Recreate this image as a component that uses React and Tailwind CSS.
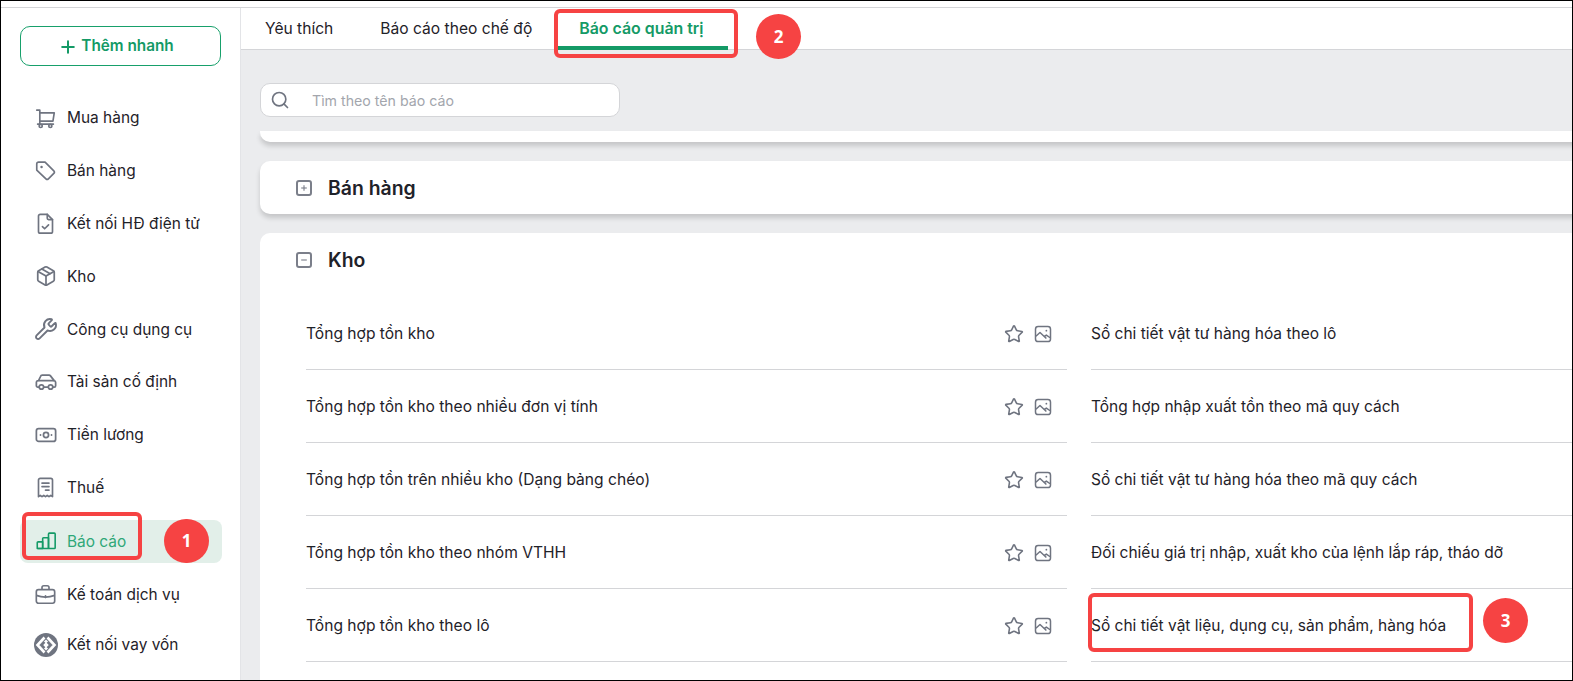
import { Plus, Package, Wrench, Star, Search } from "lucide-react";

const Cart = (props) => (
  <svg viewBox="0 0 24 24" fill="none" stroke="currentColor" strokeWidth="1.9" strokeLinejoin="round" strokeLinecap="round" {...props}>
    <path d="M2 2.5h3.5v15.5" />
    <path d="M5.5 5.5H22l-1.5 9.5h-15" />
    <path d="M3 18.5h18" />
    <circle cx="6.5" cy="20.5" r="1.8" />
    <circle cx="17.5" cy="20.5" r="1.8" />
  </svg>
);

const TagIcon = (props) => (
  <svg viewBox="0 0 24 24" fill="none" stroke="currentColor" strokeWidth="1.9" strokeLinejoin="round" {...props}>
    <path d="M2 4.5a2 2 0 0 1 2-2h7.5l10 10a2 2 0 0 1 0 2.8l-6.2 6.2a2 2 0 0 1-2.8 0L2 11.5z" />
    <circle cx="7.5" cy="8" r="1.4" fill="currentColor" stroke="none" />
  </svg>
);

const FileIcon = (props) => (
  <svg viewBox="0 0 24 24" fill="none" stroke="currentColor" strokeWidth="1.9" strokeLinejoin="round" strokeLinecap="round" {...props}>
    <path d="M6 1.5h8l6 6V21a2 2 0 0 1-2 2H6a2 2 0 0 1-2-2V3.5a2 2 0 0 1 2-2z" />
    <path d="M14 1.5V6a1.5 1.5 0 0 0 1.5 1.5H20" />
    <path d="M8.5 15.5l2.5 2.5 4.5-4.5" />
  </svg>
);

const CarIcon = (props) => (
  <svg viewBox="0 0 24 24" fill="none" stroke="currentColor" strokeWidth="1.9" strokeLinejoin="round" {...props}>
    <path d="M4.5 17.5H3a1.5 1.5 0 0 1-1.5-1.5v-3.5a2 2 0 0 1 2-2h.4L6 6a2 2 0 0 1 1.9-1.4h7.5a2 2 0 0 1 1.5.7l4 5.2a2 2 0 0 1 1.6 2V16a1.5 1.5 0 0 1-1.5 1.5h-1.5" />
    <path d="M9.5 17.5h5M4 10.5h17" />
    <circle cx="7" cy="17.5" r="2.4" />
    <circle cx="17" cy="17.5" r="2.4" />
  </svg>
);

const Money = (props) => (
  <svg viewBox="0 0 24 24" fill="none" stroke="currentColor" strokeWidth="1.8" {...props}>
    <rect x="1.5" y="5" width="21" height="14" rx="2.5" />
    <circle cx="12" cy="12" r="2.8" />
    <path d="M6 12h.01M18 12h.01" strokeWidth="2" strokeLinecap="round" />
  </svg>
);

const Receipt = (props) => (
  <svg viewBox="0 0 24 24" fill="none" stroke="currentColor" strokeWidth="1.9" strokeLinejoin="round" {...props}>
    <path d="M4 22.5V3.5a2 2 0 0 1 2-2h12a2 2 0 0 1 2 2v19l-2-1.5-2 1.5-2-1.5-2 1.5-2-1.5-2 1.5-2-1.5z" />
    <path d="M8 7h8M8 11h8M12 15h4" strokeLinecap="round" />
  </svg>
);

const Bars = (props) => (
  <svg viewBox="0 0 24 24" fill="none" stroke="currentColor" strokeWidth="2.1" strokeLinejoin="round" {...props}>
    <path d="M1.5 21v-7a1 1 0 0 1 1-1H8v8z" />
    <path d="M8 21V9a1 1 0 0 1 1-1h5.5a.5.5 0 0 1 .5.5V21" />
    <path d="M15 21V3.5a1 1 0 0 1 1-1h6a1 1 0 0 1 1 1V20a1 1 0 0 1-1 1H2" />
  </svg>
);

const Briefcase = (props) => (
  <svg viewBox="0 0 24 24" fill="none" stroke="currentColor" strokeWidth="1.9" strokeLinejoin="round" {...props}>
    <rect x="1.5" y="6.5" width="21" height="15.5" rx="2.5" />
    <path d="M8 6.5V4a2 2 0 0 1 2-2h4a2 2 0 0 1 2 2v2.5" />
    <path d="M1.5 13c6.5 2.5 14.5 2.5 21 0" />
    <path d="M12 13.5v2" strokeLinecap="round" />
  </svg>
);

const Loan = (props) => (
  <svg viewBox="0 0 24 24" {...props}>
    <circle cx="12" cy="12" r="12" fill="currentColor" />
    <path d="M10.5 4.5 3.5 12l7 7.5M13.5 4.5l7 7.5-7 7.5" fill="none" stroke="#fff" strokeWidth="2.6" />
    <path d="M12 6.5 17.5 12 12 17.5 6.5 12z" fill="#fff" />
    <path d="M10.5 9 7.8 12l2.7 3M13.5 9l2.7 3-2.7 3" fill="none" stroke="currentColor" strokeWidth="2.2" />
  </svg>
);

const PhotoIcon = (props) => (
  <svg viewBox="0 0 24 24" fill="none" stroke="currentColor" strokeWidth="2" strokeLinejoin="round" {...props}>
    <rect x="2" y="2" width="20" height="20" rx="3.5" />
    <path d="M2.5 15l5.5-5 8.5 8M14 15l2.5-1.5L21.5 17" />
    <circle cx="16.5" cy="7.5" r="1.2" fill="currentColor" stroke="none" />
  </svg>
);

const SquareSign = ({ minus }) => (
  <span className="flex h-[16px] w-[16px] items-center justify-center rounded-[3px] border-2 border-[#7b7f8a]">
    <svg viewBox="0 0 10 10" className="h-[8px] w-[8px]" stroke="#7b7f8a" strokeWidth="1.4" fill="none">
      <path d="M1.5 5h7" />
      {!minus && <path d="M5 1.5v7" />}
    </svg>
  </span>
);

const menu = [
  { label: "Mua hàng", icon: Cart, size: "h-[21px] w-[21px]" },
  { label: "Bán hàng", icon: TagIcon, size: "h-[21px] w-[21px]" },
  { label: "Kết nối HĐ điện tử", icon: FileIcon, size: "h-[21px] w-[21px]" },
  { label: "Kho", icon: Package, size: "h-[22px] w-[22px]" },
  { label: "Công cụ dụng cụ", icon: Wrench, size: "h-[24px] w-[24px]" },
  { label: "Tài sản cố định", icon: CarIcon, size: "h-[22px] w-[22px]" },
  { label: "Tiền lương", icon: Money, size: "h-[22px] w-[22px]" },
  { label: "Thuế", icon: Receipt, size: "h-[21px] w-[21px]" },
  { label: "Báo cáo", icon: Bars, active: true, size: "h-[20px] w-[20px]" },
  { label: "Kế toán dịch vụ", icon: Briefcase, size: "h-[21px] w-[21px]" },
  { label: "Kết nối vay vốn", icon: Loan, size: "h-[24px] w-[24px]", last: true },
];

const rows = [
  ["Tổng hợp tồn kho", "Sổ chi tiết vật tư hàng hóa theo lô"],
  ["Tổng hợp tồn kho theo nhiều đơn vị tính", "Tổng hợp nhập xuất tồn theo mã quy cách"],
  ["Tổng hợp tồn trên nhiều kho (Dạng bảng chéo)", "Sổ chi tiết vật tư hàng hóa theo mã quy cách"],
  ["Tổng hợp tồn kho theo nhóm VTHH", "Đối chiếu giá trị nhập, xuất kho của lệnh lắp ráp, tháo dỡ"],
  ["Tổng hợp tồn kho theo lô", "Sổ chi tiết vật liệu, dụng cụ, sản phẩm, hàng hóa"],
];

const Badge = ({ className, children }) => (
  <div
    className={`absolute flex items-center justify-center rounded-full bg-[#f64343] text-[17px] font-bold text-white ${className}`}
    style={{ fontFamily: "'Open Sans', sans-serif" }}
  >
    {children}
  </div>
);

export default function App() {
  return (
    <div
      className="relative flex h-[681px] w-[1573px] flex-col overflow-hidden border border-black bg-white pt-[6px] text-[#1f2229]"
      style={{ fontFamily: "Inter, sans-serif" }}
    >
      <div className="flex min-h-0 flex-1 border-t border-[#d4d5d8]">
        {/* sidebar */}
        <aside className="flex w-[240px] shrink-0 flex-col border-r border-[#e3e4e7] pl-[19px] pr-[18px]">
          <button className="mt-[18px] flex h-[40px] w-[201px] shrink-0 items-center justify-center gap-[3px] rounded-[10px] border border-[#17a06b] pr-[9px] pt-[1px] text-[15.3px] font-semibold text-[#149a66]">
            <Plus className="h-[20px] w-[20px]" strokeWidth={2.4} />
            Thêm nhanh
          </button>
          <nav className="mt-[30.5px] flex flex-col gap-[9.8px]">
            {menu.map((m) => {
              const Icon = m.icon;
              return (
                <div
                  key={m.label}
                  className={`flex h-[43px] items-center gap-[11px] rounded-[8px] pl-[15px] text-[15.45px] ${
                    m.active ? "mt-[1px] bg-[#e2efe9] text-[#2fa878]" : ""
                  } ${m.last ? "-mt-[2px]" : ""}`}
                >
                  <span className="flex h-[21px] w-[21px] shrink-0 items-center justify-center">
                    <Icon
                      className={`shrink-0 ${m.size} ${m.active ? "text-[#149a66]" : "text-[#6f7480]"}`}
                      strokeWidth={1.9}
                    />
                  </span>
                  {m.label}
                </div>
              );
            })}
          </nav>
        </aside>

        {/* content */}
        <main className="flex min-w-0 flex-1 flex-col overflow-hidden">
          <div className="flex h-[42px] shrink-0 gap-[47px] border-b border-[#d4d5d8] pl-[24px] pt-[9px] text-[15.6px]">
            <div>Yêu thích</div>
            <div>Báo cáo theo chế độ</div>
            <div className="text-[15.9px] font-semibold text-[#149a66]">Báo cáo quản trị</div>
          </div>
          <div className="flex min-h-0 flex-1 flex-col bg-[#ebecee] pl-[19px]">
            <div className="mt-[33px] flex h-[34px] w-[360px] shrink-0 items-center rounded-[10px] border border-[#d4d5d8] bg-white pl-[9px] text-[14.2px] text-[#a3a6ad]">
              <Search className="h-[20px] w-[20px] text-[#6f7480]" strokeWidth={2} />
              <span className="ml-[22px] pt-[2px]">Tìm theo tên báo cáo</span>
            </div>
            <div className="-mr-[12px] mt-[14px] h-[11px] shrink-0 rounded-b-[10px] bg-white shadow-[0_4px_5px_rgba(0,0,0,0.16)]" />
            <div className="-mr-[12px] mt-[19px] flex h-[53px] shrink-0 items-center gap-[16px] rounded-[10px] bg-white pl-[36px] shadow-[0_4px_5px_rgba(0,0,0,0.16)]">
              <SquareSign />
              <span className="pt-[2px] text-[19.4px] font-semibold">Bán hàng</span>
            </div>
            <div className="-mr-[12px] mt-[19px] min-h-0 flex-1 rounded-t-[10px] bg-white">
              <div className="flex h-[64px] items-center gap-[16px] pb-[11px] pl-[36px]">
                <SquareSign minus />
                <span className="pt-[2px] text-[19.4px] font-semibold">Kho</span>
              </div>
              <div className="mr-[12px] flex flex-col">
                {rows.map((r) => (
                  <div key={r[0]} className="flex h-[73px] shrink-0">
                    <div className="ml-[46px] flex w-[761px] items-center border-b border-[#d4d5d8] pt-[2px] text-[15.6px]">
                      <span className="flex-1">{r[0]}</span>
                      <Star className="h-[20px] w-[20px] text-[#6f7480]" strokeWidth={1.9} />
                      <PhotoIcon className="ml-[10px] mr-[15px] h-[18px] w-[18px] text-[#6f7480]" />
                    </div>
                    <div className="ml-[24px] flex flex-1 items-center border-b border-[#d4d5d8] pt-[2px] text-[15.5px]">
                      {r[1]}
                    </div>
                  </div>
                ))}
              </div>
            </div>
          </div>
        </main>
      </div>

      {/* annotations */}
      <div className="absolute left-[21px] top-[511px] h-[48px] w-[120px] rounded-[6px] border-4 border-[#f64343]" />
      <Badge className="left-[163px] top-[518px] h-[44px] w-[45px]">1</Badge>
      <div className="absolute left-[553px] top-[8px] h-[49px] w-[184px] rounded-[6px] border-4 border-[#f64343]" />
      <div className="absolute left-[557px] top-[45px] h-[4px] w-[170px] bg-[#149a66]" />
      <Badge className="left-[755px] top-[13px] h-[45px] w-[45px]">2</Badge>
      <div className="absolute left-[1087px] top-[592px] h-[59px] w-[385px] rounded-[6px] border-4 border-[#f64343]" />
      <Badge className="left-[1482px] top-[597px] h-[45px] w-[45px]">3</Badge>
    </div>
  );
}
